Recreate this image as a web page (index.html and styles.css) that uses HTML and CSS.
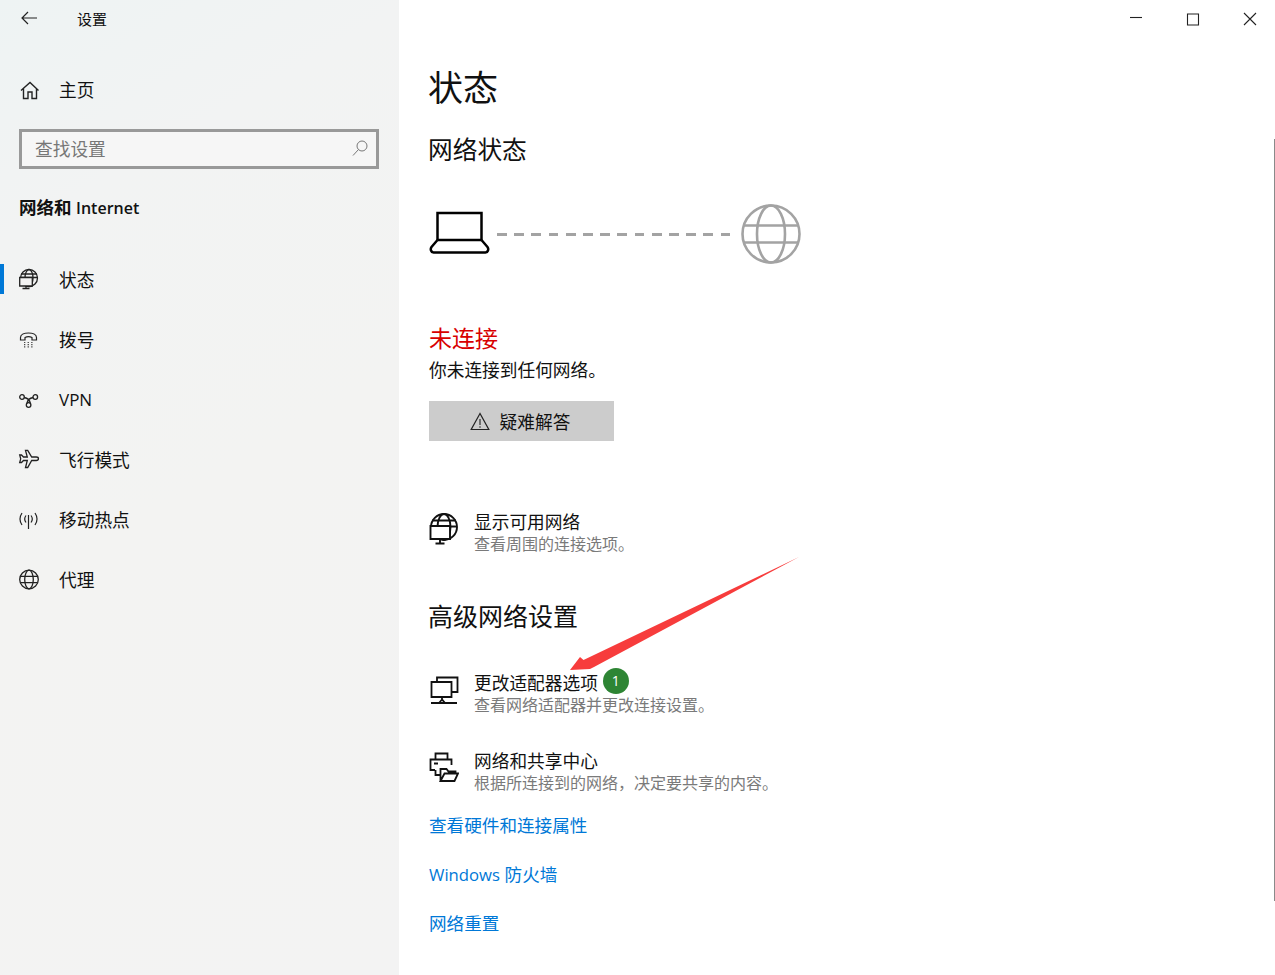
FILE: index.html
```html
<!DOCTYPE HTML>
<html lang="zh-CN">
  <head>
    <meta charset="utf-8">
    <title>设置</title>
    <link rel="stylesheet" href="styles.css">
  </head>
  <body>
    <div class="window">
      <aside class="side">
        <div class="titlebar">
          <svg class="back" width="16" height="14" viewBox="0 0 16 14"><path d="M7 1 1 7l6 6M1 7h15" fill="none" stroke="#222" stroke-width="1.200"/></svg>
          <span>设置</span>
        </div>
        <div class="row home">
          <svg class="ico" width="20" height="20" viewBox="0 0 20 20"><path d="M2 11.500 11 3.500l8.500 8M4.500 9.500v10h4.500v-6.500h4v6.500h4.500v-10" fill="none" stroke="#222" stroke-width="1.400"/></svg>
          <span>主页</span>
        </div>
        <div class="search">
          <span>查找设置</span>
          <svg width="16" height="17" viewBox="0 0 16 17"><circle cx="10" cy="6" r="5" fill="none" stroke="#777" stroke-width="1"/><path d="M6.500 9.500 1 15.500" stroke="#777" stroke-width="1"/></svg>
        </div>
        <div class="group">网络和 <span class="lat-g">Internet</span></div>
        <nav class="nav">
          <div class="row active">
            <svg class="ico" width="20" height="20" viewBox="0 0 20 20"><g fill="none" stroke="#222" stroke-width="1.300"><circle cx="10" cy="9" r="8.500"/><ellipse cx="10" cy="9" rx="4" ry="8.500"/><path d="M2 5h16M2 8.500h17"/><path d="M.7 8.500h12.600V17H.7z" fill="#f3f3f3"/><path d="M7 17v2.500M3.500 19.500H10.500"/></g></svg>
            <span>状态</span>
          </div>
          <div class="row">
            <svg class="ico" width="20" height="20" viewBox="0 0 20 20"><path d="M1.500 11V8.500C1.500 2.500 17.500 2.500 17.500 8.500V11H13V8.500c-2-1-5-1-7 0V11z" fill="none" stroke="#222" stroke-width="1.200"/><path d="M5 13.500h9.500M5 15.700h9.500M5 17.900h9.500" stroke="#444" stroke-width="1.200" stroke-dasharray="1.300 2.300"/></svg>
            <span>拨号</span>
          </div>
          <div class="row">
            <svg class="ico" width="20" height="20" viewBox="0 0 20 20"><g fill="none" stroke="#222" stroke-width="1.300"><circle cx="3" cy="8" r="2.300"/><circle cx="16.300" cy="8" r="2.300"/><circle cx="9.600" cy="16" r="2.300"/><path d="M5.200 8.500c3 .5 5.500 2 6.200 6M14.100 8.500c-3 .5-5.500 2-6.200 6"/></g></svg>
            <span class="lat-v">VPN</span>
          </div>
          <div class="row">
            <svg class="ico" width="20" height="20" viewBox="0 0 20 20"><path d="M6.500 1.300h2.200l4 6.700h4.500c3 0 3 3.500 0 3.500h-4.500l-4 7H6.500l1.800-7H4.500l-2 2H.7l1-3.700-1-3.800h1.800l2 2h3.800z" fill="none" stroke="#222" stroke-width="1.300"/></svg>
            <span>飞行模式</span>
          </div>
          <div class="row">
            <svg class="ico" width="20" height="20" viewBox="0 0 20 20"><path d="M3 4C.3 8 .3 12 3 16M7 6.500c-1.500 2-1.500 5 0 7M16 4c2.700 4 2.700 8 0 12M12 6.500c1.500 2 1.500 5 0 7M9.500 6v14" fill="none" stroke="#222" stroke-width="1.200"/></svg>
            <span>移动热点</span>
          </div>
          <div class="row">
            <svg class="ico" width="20" height="20" viewBox="0 0 20 20"><g fill="none" stroke="#222" stroke-width="1.300"><circle cx="10" cy="10.500" r="9.300"/><ellipse cx="10" cy="10.500" rx="4.300" ry="9.300"/><path d="M1.800 7.300h16.400M1.800 13.700h16.400"/></g></svg>
            <span>代理</span>
          </div>
        </nav>
      </aside>

      <main class="main">
        <div class="controls">
          <svg width="14" height="14" viewBox="0 0 14 14"><path d="M1 5.500h12" stroke="#222" stroke-width="1.100"/></svg>
          <svg width="14" height="14" viewBox="0 0 14 14"><path d="M1.500 2h11v11h-11z" fill="none" stroke="#222" stroke-width="1.100"/></svg>
          <svg width="14" height="14" viewBox="0 0 14 14"><path d="M1 1l12 12M13 1 1 13" stroke="#222" stroke-width="1.100"/></svg>
        </div>

        <h1>状态</h1>
        <h2 class="net">网络状态</h2>

        <div class="diagram">
          <svg width="62" height="46" viewBox="0 0 62 46"><g fill="none" stroke="#000" stroke-width="2.500"><path d="M8.500 29V2h44v27M8.500 29h44"/><path d="M8.500 29 2.500 36c-1.500 2-.5 5.500 2 5.500h52c2.500 0 3.500-3.500 2-5.500l-6-7"/></g></svg>
          <div class="dash"></div>
          <svg width="60" height="60" viewBox="0 0 60 60"><g fill="none" stroke="#a3a3a3" stroke-width="2.600"><circle cx="30" cy="30" r="28.500"/><ellipse cx="30" cy="30" rx="14" ry="28.500"/><path d="M3 21.500h54M3 38.500h54"/></g></svg>
        </div>

        <div class="state">未连接</div>
        <div class="state-sub">你未连接到任何网络。</div>
        <div class="fix">
          <svg width="20" height="19" viewBox="0 0 20 19"><path d="M10 1.500 1.200 17.500h17.600z" fill="none" stroke="#222" stroke-width="1.200"/><path d="M10 7v6M10 14.200v1.500" stroke="#222" stroke-width="1.100"/></svg>
          <span>疑难解答</span>
        </div>

        <div class="item first">
          <svg class="big" width="30" height="32" viewBox="0 0 30 32"><g fill="none" stroke="#111" stroke-width="1.900"><circle cx="15" cy="14" r="13"/><ellipse cx="15" cy="14" rx="6.500" ry="13"/><path d="M3 7.500h24M2 13.500h26"/><path d="M1.500 13h19.500v13H1.500z" fill="#fff"/><path d="M11 26v4.500M6.500 30.500h9"/></g></svg>
          <div class="txt"><div class="t">显示可用网络</div><div class="s">查看周围的连接选项。</div></div>
        </div>

        <h2 class="adv">高级网络设置</h2>

        <div class="item second">
          <svg class="big" width="30" height="30" viewBox="0 0 30 30"><g fill="none" stroke="#111" stroke-width="1.800"><path d="M8 7V2.500h20.500V17h-6"/><path d="M2.500 7h20v15h-20zM13 22v3M13 24.500 10 28h6zM2 28h26"/></g></svg>
          <div class="txt"><div class="t">更改适配器选项<span class="badge">1</span></div><div class="s">查看网络适配器并更改连接设置。</div></div>
        </div>

        <div class="item third">
          <svg class="big" width="30" height="30" viewBox="0 0 30 30"><g fill="none" stroke="#111" stroke-width="1.800"><path d="M6.500 7V1.500h12V7M6 18H1.500V7.500h21V13M5 11.500h4M6.500 18v5h5"/><path d="M11.500 29V17h6l2 2.500h7V22M11.500 29l4-7.500H29L25.500 29z"/></g></svg>
          <div class="txt"><div class="t">网络和共享中心</div><div class="s">根据所连接到的网络，决定要共享的内容。</div></div>
        </div>

        <a class="lnk l1">查看硬件和连接属性</a>
        <a class="lnk"><span class="lat-w">Windows</span> 防火墙</a>
        <a class="lnk">网络重置</a>

        <svg class="arrow" width="240" height="125" viewBox="0 0 240 125"><polygon points="240,1 24.500,104 21,101 11,114 31,113 35,111" fill="#f73c3c"/></svg>
      </main>
      <div class="bar"></div>
    </div>
  </body>
</html>
```

FILE: styles.css
```css
* { box-sizing: border-box; }

html, body {
  margin: 0;
  height: 100%;
  background: #fff;
}

body {
  font-family: "Open Sans", "Noto Sans CJK SC", sans-serif;
  color: #111;
  overflow: hidden;
}

.window {
  position: relative;
  display: flex;
  width: 1275px;
  height: 975px;
}

/* left pane */
.side {
  width: 399px;
  flex: none;
  background: linear-gradient(150deg, #eef3f3 0%, #f2f3f3 20%, #f3f3f2 50%, #f3f3f3 100%);
}

.titlebar {
  display: flex;
  align-items: center;
  height: 36px;
  padding-left: 21px;
  font-size: 15px;
}
.titlebar .back { margin-right: 40px; }

.row {
  position: relative;
  display: flex;
  align-items: center;
  height: 60px;
  padding-left: 19px;
  font-size: 17.700px;
}
.row .ico { margin-right: 20px; flex: none; overflow: visible; }
.row.home { height: 32px; margin-top: 37px; }

.row.active::before {
  content: "";
  position: absolute;
  left: 0;
  top: 15px;
  width: 4px;
  height: 30px;
  background: #0078d7;
}

.lat-v { font-size: 17px; }
.lat-g { font-size: 16px; }
.lat-w { font-size: 16.700px; }

.search {
  display: flex;
  align-items: center;
  justify-content: space-between;
  width: 360px;
  height: 40px;
  margin: 24px 0 0 19px;
  padding: 0 8px 2px 13px;
  border: 3px solid #999;
  background: #f6f6f6;
  font-size: 17.700px;
  color: #777;
}

.group {
  margin: 25px 0 0 19px;
  height: 26px;
  line-height: 26px;
  font-size: 17.500px;
  font-weight: 600;
}

.nav { margin-top: 29px; }

/* right pane */
.main {
  position: relative;
  flex: 1;
  padding-left: 30px;
}

.controls {
  position: absolute;
  top: 12px;
  right: 18px;
  display: flex;
  gap: 43px;
}

h1 {
  margin: 0 0 0 -1px;
  padding-top: 63px;
  height: 125px;
  line-height: 50px;
  font-size: 35px;
  font-weight: 400;
}

h2 {
  margin: 0;
  height: 50px;
  line-height: 50px;
  font-size: 25px;
  font-weight: 400;
}
h2.net { margin-left: -1px; font-size: 24.700px; }

.diagram {
  display: flex;
  align-items: center;
  height: 60px;
  margin-top: 29px;
  width: 372px;
}
.diagram svg { flex: none; }
.dash {
  flex: 1;
  height: 3px;
  margin: 0 10px 0 6px;
  background: repeating-linear-gradient(90deg, #a3a3a3 0 9.700px, transparent 9.700px 17.200px);
}

.state {
  margin-top: 56px;
  height: 36px;
  line-height: 36px;
  font-size: 23px;
  color: #d80000;
}

.state-sub {
  height: 28px;
  line-height: 28px;
  font-size: 17.700px;
}

.fix {
  display: flex;
  align-items: center;
  justify-content: center;
  gap: 10px;
  width: 185px;
  height: 40px;
  margin-top: 17px;
  padding-right: 3px;
  background: #ccc;
  font-size: 17.700px;
}

.item {
  display: flex;
  height: 48px;
}
.item .big { flex: none; margin-right: 15px; }
.item.first { margin-top: 69px; }
.item.first .big { margin-top: 3px; }
.item.second .big { margin-top: 4px; }
.item.third { margin-top: 30px; }
.item.third .big { margin-top: 3px; }

.t {
  display: flex;
  align-items: center;
  height: 24px;
  line-height: 24px;
  font-size: 17.700px;
}
.s {
  height: 22px;
  line-height: 20px;
  font-size: 16px;
  color: #7a7a7a;
}

.adv { margin: 33px 0 30px -1px; }

.badge {
  display: flex;
  align-items: center;
  justify-content: center;
  flex: none;
  width: 26px;
  height: 26px;
  margin: -4px 0 0 5px;
  border-radius: 50%;
  background: #2e8534;
  color: #fff;
  font-size: 14px;
}

.lnk {
  display: block;
  height: 49px;
  line-height: 26px;
  font-size: 17.600px;
  color: #0078d7;
}
.lnk.l1 { margin-top: 15px; }

/* annotation on top of the screenshot */
.arrow {
  position: absolute;
  left: 160px;
  top: 556px;
}

/* scrollbar sliver */
.bar {
  position: absolute;
  right: 0;
  top: 139px;
  width: 1px;
  height: 762px;
  background: #8a8a8a;
}
```
